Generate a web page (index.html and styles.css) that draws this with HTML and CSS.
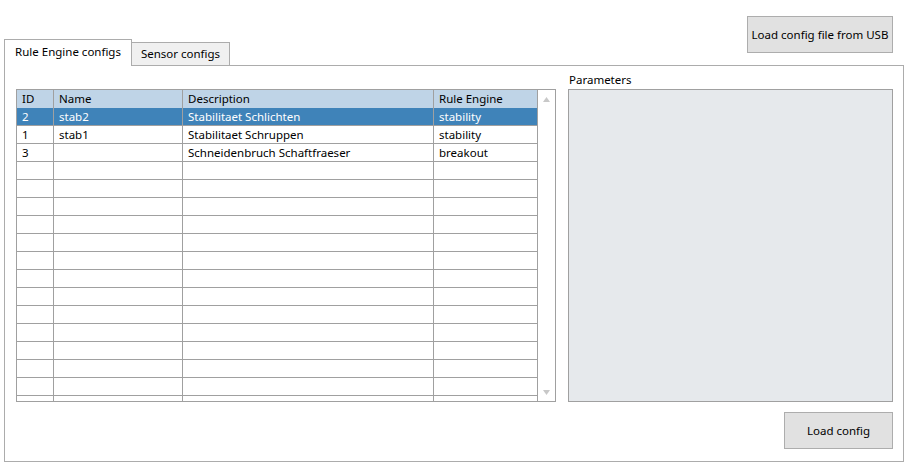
FILE: index.html
```html
<!DOCTYPE html>
<html>
<head>
<meta charset="utf-8">
<link rel="stylesheet" href="styles.css">
</head>
<body>
<div class="window">
  <div class="header">
    <div class="tabs">
      <div class="tab active">Rule Engine configs</div>
      <div class="tab">Sensor configs</div>
    </div>
    <button class="btn usb">Load config file from USB</button>
  </div>
  <div class="panel">
    <div class="content">
      <div class="table">
        <div class="grid">
          <div class="row head"><div class="c">ID</div><div class="c">Name</div><div class="c">Description</div><div class="c">Rule Engine</div></div>
          <div class="row sel"><div class="c">2</div><div class="c">stab2</div><div class="c">Stabilitaet Schlichten</div><div class="c">stability</div></div>
          <div class="row"><div class="c">1</div><div class="c">stab1</div><div class="c">Stabilitaet Schruppen</div><div class="c">stability</div></div>
          <div class="row"><div class="c">3</div><div class="c"></div><div class="c">Schneidenbruch Schaftfraeser</div><div class="c">breakout</div></div>
          <div class="row"><div class="c"></div><div class="c"></div><div class="c"></div><div class="c"></div></div>
          <div class="row"><div class="c"></div><div class="c"></div><div class="c"></div><div class="c"></div></div>
          <div class="row"><div class="c"></div><div class="c"></div><div class="c"></div><div class="c"></div></div>
          <div class="row"><div class="c"></div><div class="c"></div><div class="c"></div><div class="c"></div></div>
          <div class="row"><div class="c"></div><div class="c"></div><div class="c"></div><div class="c"></div></div>
          <div class="row"><div class="c"></div><div class="c"></div><div class="c"></div><div class="c"></div></div>
          <div class="row"><div class="c"></div><div class="c"></div><div class="c"></div><div class="c"></div></div>
          <div class="row"><div class="c"></div><div class="c"></div><div class="c"></div><div class="c"></div></div>
          <div class="row"><div class="c"></div><div class="c"></div><div class="c"></div><div class="c"></div></div>
          <div class="row"><div class="c"></div><div class="c"></div><div class="c"></div><div class="c"></div></div>
          <div class="row"><div class="c"></div><div class="c"></div><div class="c"></div><div class="c"></div></div>
          <div class="row"><div class="c"></div><div class="c"></div><div class="c"></div><div class="c"></div></div>
          <div class="row"><div class="c"></div><div class="c"></div><div class="c"></div><div class="c"></div></div>
          <div class="row"><div class="c"></div><div class="c"></div><div class="c"></div><div class="c"></div></div>
        </div>
        <div class="scroll">
          <svg width="7" height="5" viewBox="0 0 7 5"><path d="M3.5 0 L7 5 L0 5 Z" fill="#c8c8c8"/></svg>
          <svg width="7" height="5" viewBox="0 0 7 5"><path d="M0 0 L7 0 L3.5 5 Z" fill="#c8c8c8"/></svg>
        </div>
      </div>
      <div class="params">
        <div class="label">Parameters</div>
        <div class="pbox"></div>
      </div>
    </div>
    <div class="footer">
      <button class="btn load">Load config</button>
    </div>
  </div>
</div>
</body>
</html>
```
FILE: styles.css
```css
html, body {
  margin: 0;
  padding: 0;
  background: #ffffff;
}
body {
  font-family: "Noto Sans", "Open Sans", sans-serif;
  font-size: 11.5px;
  color: #000;
  width: 909px;
  height: 469px;
  overflow: hidden;
}
.window {
  padding: 0 5px 0 4px;
}
.header {
  display: flex;
  align-items: flex-end;
  justify-content: space-between;
  padding-top: 16px;
}
.tabs {
  display: flex;
  align-items: flex-end;
  margin-bottom: -1px;
  position: relative;
  z-index: 1;
}
.tab {
  box-sizing: border-box;
  border: 1px solid #acacac;
  display: flex;
  align-items: center;
  justify-content: center;
  line-height: 1;
}
.tab.active {
  width: 128px;
  height: 27px;
  border-bottom: none;
  background: #fff;
  padding-bottom: 3px;
}
.tab:not(.active) {
  width: 98px;
  height: 24px;
  border-left: none;
  background: #f0f0f0;
  padding-top: 0;
}
.btn {
  font-family: inherit;
  font-size: 11.5px;
  color: #000;
  background: #e1e1e1;
  border: 1px solid #adadad;
  box-sizing: border-box;
  padding: 0;
  margin: 0;
}
.usb {
  width: 146px;
  height: 37px;
  margin-right: 11px;
  margin-bottom: 12px;
}
.panel {
  border: 1px solid #acacac;
  box-sizing: border-box;
  height: 397px;
  padding: 23px 10px 12px 11px;
  display: flex;
  flex-direction: column;
}
.content {
  display: flex;
  gap: 12px;
}
.table {
  display: flex;
  border: 1px solid #a0a0a0;
  width: 540px;
  height: 313px;
  box-sizing: border-box;
  overflow: hidden;
}
.grid {
  width: 521px;
  overflow: hidden;
}
.row {
  display: grid;
  grid-template-columns: 37px 129px 251px 104px;
  height: 18px;
}
.row.head {
  background: #bfd4e7;
  height: 18px;
}
.row.head .c {
  border-bottom: none;
}
.c {
  box-sizing: border-box;
  border-right: 1px solid #a0a0a0;
  border-bottom: 1px solid #a0a0a0;
  padding-left: 5px;
  line-height: 17px;
  white-space: nowrap;
  overflow: hidden;
}
.row.sel {
  background: #3f83b9;
  color: #fff;
}
.scroll {
  width: 17px;
  display: flex;
  flex-direction: column;
  justify-content: space-between;
  align-items: center;
  padding: 7px 0 6px;
  box-sizing: border-box;
}
.params {
  width: 325px;
  display: flex;
  flex-direction: column;
  margin-top: -18px;
}
.label {
  height: 18px;
  line-height: 18px;
  padding-left: 1px;
}
.pbox {
  height: 313px;
  box-sizing: border-box;
  border: 1px solid #a0a0a0;
  background: #e6e9ec;
}
.footer {
  display: flex;
  justify-content: flex-end;
  margin-top: 10px;
}
.load {
  width: 109px;
  height: 37px;
}
```
